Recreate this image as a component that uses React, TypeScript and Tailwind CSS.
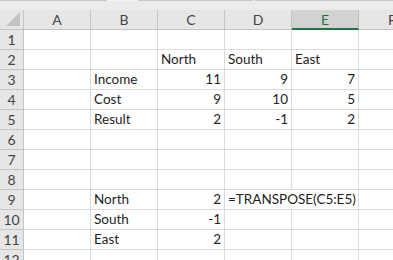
import React from "react";

type Cell = { v: string; num?: boolean; spill?: boolean };

const COLS = ["A", "B", "C", "D", "E", "F"];
const ACTIVE_COL = "E";

// sheet contents keyed by row number, then column letter
const data: Record<number, Record<string, Cell>> = {
  2: { C: { v: "North" }, D: { v: "South" }, E: { v: "East" } },
  3: { B: { v: "Income" }, C: { v: "11", num: true }, D: { v: "9", num: true }, E: { v: "7", num: true } },
  4: { B: { v: "Cost" }, C: { v: "9", num: true }, D: { v: "10", num: true }, E: { v: "5", num: true } },
  5: { B: { v: "Result" }, C: { v: "2", num: true }, D: { v: "-1", num: true }, E: { v: "2", num: true } },
  9: { B: { v: "North" }, C: { v: "2", num: true }, D: { v: "=TRANSPOSE(C5:E5)", spill: true } },
  10: { B: { v: "South" }, C: { v: "-1", num: true } },
  11: { B: { v: "East" }, C: { v: "2", num: true } },
};

const rows = Array.from({ length: 12 }, (_, i) => i + 1);

export default function App() {
  return (
    <div className="w-[393px] h-[260px] overflow-hidden bg-white font-['Lato',sans-serif] text-[13.5px] text-[#1e1e1e]">
      {/* strip under the formula bar */}
      <div className="flex h-[10px] bg-[#ececec]">
        <div className="w-[107px] border-t border-[#c6c6c6]" />
        <div className="w-[31px] border-t border-[#f4f4f4]" />
        <div className="w-[115px] border-t border-[#c6c6c6]" />
        <div className="w-[2px]" />
        <div className="flex-1 border-t border-[#c6c6c6]" />
      </div>

      <div className="grid grid-cols-[24px_repeat(6,67px)]">
        {/* column headers */}
        <div className="relative h-[20px] bg-[#e6e6e6] border-r border-b border-[#c4c4c4]">
          <svg className="absolute right-[3px] bottom-[3px]" width="14" height="14" viewBox="0 0 14 14">
            <path d="M14 0 L14 14 L0 14 Z" fill="#c2c2c2" />
          </svg>
        </div>
        {COLS.map((c) =>
          c === ACTIVE_COL ? (
            <div
              key={c}
              className="h-[20px] bg-[#d2d2d2] border-r border-[#bdbdbd] border-b-2 border-b-[#217346] flex items-center justify-center text-[#217346] text-[14px]"
            >
              {c}
            </div>
          ) : (
            <div
              key={c}
              className="h-[20px] bg-[#e6e6e6] border-r border-b border-[#c4c4c4] flex items-center justify-center text-[#444444] text-[14px]"
            >
              {c}
            </div>
          )
        )}

        {/* sheet body */}
        {rows.map((r) => (
          <React.Fragment key={r}>
            <div className="h-[20px] bg-[#e6e6e6] border-r border-b border-[#c4c4c4] flex items-center justify-center text-[#444444] text-[14px]">
              {r}
            </div>
            {COLS.map((c) => {
              const cell = data[r]?.[c];
              if (cell?.spill) {
                return (
                  <div key={c} className="relative z-10 h-[20px] border-b border-[#dadada] flex items-end pl-[3px] pb-[2px] leading-[16px] whitespace-nowrap">
                    {cell.v}
                  </div>
                );
              }
              return (
                <div
                  key={c}
                  className={`h-[20px] border-r border-b border-[#dadada] flex items-end pb-[2px] leading-[16px] ${
                    cell?.num ? "justify-end pr-[3px]" : "pl-[3px]"
                  }`}
                >
                  {cell?.v}
                </div>
              );
            })}
          </React.Fragment>
        ))}
      </div>
    </div>
  );
}
